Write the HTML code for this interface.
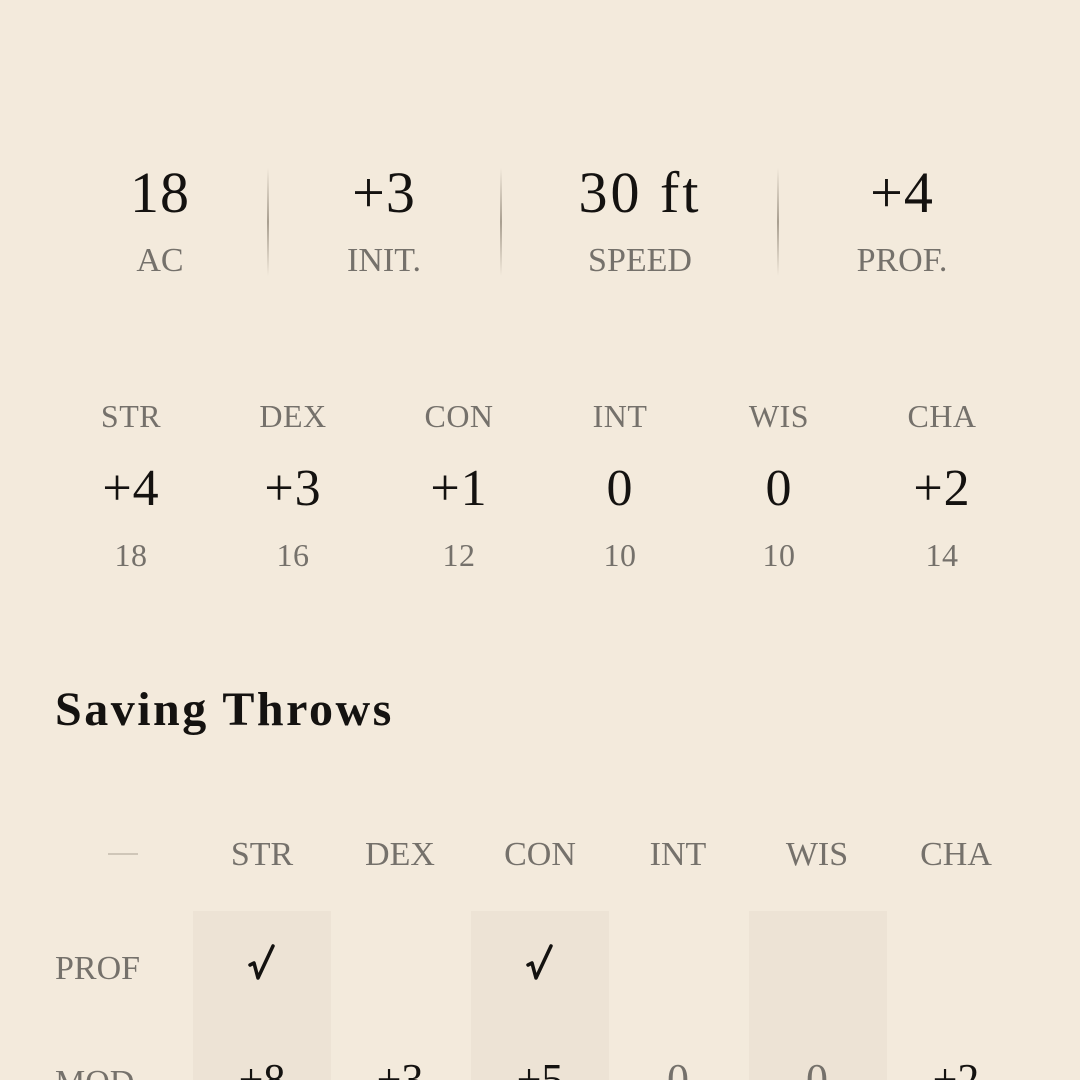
<!DOCTYPE html>
<html><head><meta charset="utf-8"><style>
html,body{margin:0;padding:0;height:1080px;overflow:hidden}
body{width:1080px;height:1080px;background:#f3eadc;position:relative;overflow:hidden;font-family:"Liberation Serif",serif;color:#141210}
.t{position:absolute;width:240px;margin-left:-120px;text-align:center;line-height:1;white-space:nowrap}
.g{color:#75716b}
.big{font-size:58px;letter-spacing:1px}
.lab{font-size:34px}
.al{font-size:32px;letter-spacing:.5px}
.av{font-size:52px;letter-spacing:1px}
.div{position:absolute;top:168px;width:2px;height:108px;background:linear-gradient(to bottom,rgba(160,150,135,0),rgba(150,140,125,.8) 50%,rgba(160,150,135,0))}
.col{position:absolute;top:911px;width:138px;height:169px;background:#ede3d5}
</style></head><body>
<div class="t big" style="left:160px;top:164px">18</div>
<div class="t big" style="left:384px;top:164px">+3</div>
<div class="t big" style="left:640px;top:164px;letter-spacing:3px">30 ft</div>
<div class="t big" style="left:902px;top:164px">+4</div>
<div class="t lab g" style="left:160px;top:244px">AC</div>
<div class="t lab g" style="left:384px;top:244px">INIT.</div>
<div class="t lab g" style="left:640px;top:244px">SPEED</div>
<div class="t lab g" style="left:902px;top:244px">PROF.</div>
<div class="div" style="left:267px"></div>
<div class="div" style="left:500px"></div>
<div class="div" style="left:777px"></div>

<div class="t al g" style="left:131px;top:400px">STR</div>
<div class="t al g" style="left:293px;top:400px">DEX</div>
<div class="t al g" style="left:459px;top:400px">CON</div>
<div class="t al g" style="left:620px;top:400px">INT</div>
<div class="t al g" style="left:779px;top:400px">WIS</div>
<div class="t al g" style="left:942px;top:400px">CHA</div>
<div class="t av" style="left:131px;top:463px">+4</div>
<div class="t av" style="left:293px;top:463px">+3</div>
<div class="t av" style="left:459px;top:463px">+1</div>
<div class="t av" style="left:620px;top:463px">0</div>
<div class="t av" style="left:779px;top:463px">0</div>
<div class="t av" style="left:942px;top:463px">+2</div>
<div class="t al g" style="left:131px;top:539px">18</div>
<div class="t al g" style="left:293px;top:539px">16</div>
<div class="t al g" style="left:459px;top:539px">12</div>
<div class="t al g" style="left:620px;top:539px">10</div>
<div class="t al g" style="left:779px;top:539px">10</div>
<div class="t al g" style="left:942px;top:539px">14</div>

<div style="position:absolute;left:55px;top:686px;font-size:48px;font-weight:bold;line-height:1;letter-spacing:2.5px">Saving Throws</div>

<div class="col" style="left:193px"></div>
<div class="col" style="left:471px"></div>
<div class="col" style="left:749px"></div>
<div style="position:absolute;left:108px;top:853px;width:30px;height:2px;background:#cfc6b8"></div>
<div class="t lab g" style="left:262px;top:838px">STR</div>
<div class="t lab g" style="left:400px;top:838px">DEX</div>
<div class="t lab g" style="left:540px;top:838px">CON</div>
<div class="t lab g" style="left:678px;top:838px">INT</div>
<div class="t lab g" style="left:817px;top:838px">WIS</div>
<div class="t lab g" style="left:956px;top:838px">CHA</div>
<div class="lab g" style="position:absolute;left:55px;top:952px;line-height:1">PROF</div>
<svg style="position:absolute;left:247px;top:943px" width="30" height="40" viewBox="0 0 30 40"><path d="M3 22 L7 20 L11 35 L26 3" fill="none" stroke="#141210" stroke-width="3.5" stroke-linejoin="round" stroke-linecap="round"/></svg>
<svg style="position:absolute;left:525px;top:943px" width="30" height="40" viewBox="0 0 30 40"><path d="M3 22 L7 20 L11 35 L26 3" fill="none" stroke="#141210" stroke-width="3.5" stroke-linejoin="round" stroke-linecap="round"/></svg>
<div class="lab g" style="position:absolute;left:55px;top:1066px;line-height:1">MOD</div>
<div class="t" style="font-size:44px;left:262px;top:1058px">+8</div>
<div class="t" style="font-size:44px;left:400px;top:1058px">+3</div>
<div class="t" style="font-size:44px;left:540px;top:1058px">+5</div>
<div class="t g" style="font-size:44px;left:678px;top:1058px">0</div>
<div class="t g" style="font-size:44px;left:817px;top:1058px">0</div>
<div class="t" style="font-size:44px;left:956px;top:1058px">+2</div>
</body></html>
